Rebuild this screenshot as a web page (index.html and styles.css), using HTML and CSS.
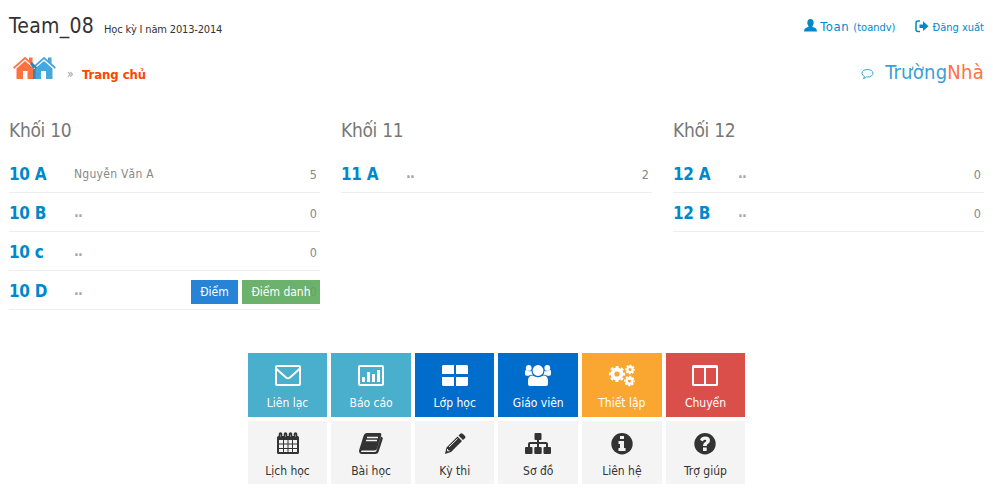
FILE: index.html
```html
<!DOCTYPE html>
<html lang="vi">
<head>
<meta charset="utf-8">
<title>Team_08</title>
<link rel="stylesheet" href="styles.css">
</head>
<body>
<header class="top">
  <div class="brand"><span class="team">Team_08</span><span class="term">Học kỳ I năm 2013-2014</span></div>
  <nav class="account">
    <a class="user"><svg class="icon-user" width="13" height="13" viewBox="0 0 13 13"><path d="M6.5 0C8.6 0 9.7 1.5 9.7 3.6S8.500 7.500 8.200 7.700L10.800 8.700Q13 9.400 13 12.500H0Q0 9.400 2.200 8.700L4.800 7.700C4.500 7.500 3.300 5.700 3.300 3.600S4.400 0 6.500 0Z"/></svg><span class="name">Toan</span><span class="login">(toandv)</span></a>
    <a class="logout"><svg class="icon-exit" width="14" height="13" viewBox="0 0 14 13"><path d="M5 1H3Q1 1 1 3V9.500Q1 11.500 3 11.500H5" fill="none" stroke="currentColor" stroke-width="1.5"/><path d="M4.500 4.400H8V1.300L13.500 6.200 8 11V8H4.500Z"/></svg><span class="exit">Đăng xuất</span></a>
  </nav>
</header>
<div class="crumbs">
  <svg class="homes" width="44" height="24" viewBox="0 0 44 24">
    <g fill="#ff7140"><path d="M0 11.500 12 .8 16 4.300V1.500H19.500V7.300L24 11.500 22.800 12.800 12 3.300 1.200 12.800Z"/><path d="M3.500 12.500 12 5 21 12.500V23H14.500V15H10V23H3.500Z"/></g>
    <g fill="#45a7dc"><path d="M19 11.500 31 .8 35 4.300V1.500H38.500V7.300L43 11.500 41.800 12.800 31 3.300 20.200 12.800Z"/><path d="M22 12.500 31 5 39.500 12.500V23H33V15H28V23H20V14Z"/></g>
    <path d="M20 14 22.500 12V23H20ZM17 8 19 6 24 11.500 22.800 12.800 21 11.200 20 12Z" fill="#3184b8"/>
  </svg>
  <span class="sep">»</span><span class="here">Trang chủ</span>
  <div class="logo"><svg class="bubble" width="13" height="12" viewBox="0 0 13 12"><path d="M6.500 1.500C9.500 1.500 12 3 12 5.200S9.500 9 6.500 9L5.400 8.900Q4.300 10.300 2.500 10.500L3.500 8.500Q1 7.400 1 5.200C1 3 3.500 1.500 6.500 1.500Z" fill="none" stroke="#3a9fd6"/></svg><span class="truong">Trường</span><span class="nha">Nhà</span></div>
</div>
<main class="grades">
  <section>
    <h2>Khối 10</h2>
    <div class="row"><b>10 A</b><span class="teacher">Nguyễn Văn A</span><span class="count">5</span></div>
    <div class="row"><b>10 B</b><span class="teacher none">..</span><span class="count">0</span></div>
    <div class="row"><b>10 c</b><span class="teacher none">..</span><span class="count">0</span></div>
    <div class="row"><b>10 D</b><span class="teacher none">..</span><span class="count">0</span><div class="actions"><a class="marks">Điểm</a><a class="roll">Điểm danh</a></div></div>
  </section>
  <section>
    <h2>Khối 11</h2>
    <div class="row"><b>11 A</b><span class="teacher none">..</span><span class="count">2</span></div>
  </section>
  <section>
    <h2>Khối 12</h2>
    <div class="row"><b>12 A</b><span class="teacher none">..</span><span class="count">0</span></div>
    <div class="row"><b>12 B</b><span class="teacher none">..</span><span class="count">0</span></div>
  </section>
</main>
<nav class="tiles">
  <a class="tile teal"><svg viewBox="0 0 26 22"><rect x="1" y="1" width="24" height="19" rx="1" class="line"/><path d="M1 3.500 11 12.500Q13 14 15 12.500L25 3.500" class="line"/></svg><span>Liên lạc</span></a>
  <a class="tile teal"><svg viewBox="0 0 26 22"><rect x="1" y="1" width="24" height="19" rx="1" class="line"/><path d="M4 12H7V17H4ZM9 7H12V17H9ZM14 9H17V17H14ZM19 5H22V17H19Z"/></svg><span>Báo cáo</span></a>
  <a class="tile blue"><svg viewBox="0 0 26 22"><path d="M1 0H12V9H0V1ZM14 0H25L26 1V9H14ZM0 12H12V21H1L0 20ZM14 12H26V20L25 21H14Z"/></svg><span>Lớp học</span></a>
  <a class="tile blue"><svg viewBox="0 0 26 22"><circle cx="13" cy="5.500" r="5.400"/><circle cx="3.700" cy="2.900" r="2.900"/><circle cx="22.300" cy="2.900" r="2.900"/><path d="M3 19V16Q3 10.500 7.500 10.500 13 14 18.500 10.500 23 10.500 23 16V19Q23 21 21 21H5Q3 21 3 19ZM0 6Q0 5 1.500 5 4 7 6.500 5.700 6.600 8.300 7.800 9.700 5 9.500 3.800 10.800H1.500Q0 10.800 0 9ZM26 6Q26 5 24.500 5 22 7 19.500 5.700 19.400 8.300 18.200 9.700 21 9.500 22.200 10.800H24.500Q26 10.800 26 9Z"/></svg><span>Giáo viên</span></a>
  <a class="tile orange"><svg viewBox="0 0 26 22"><g fill="none" stroke="currentColor"><circle cx="8" cy="9" r="4.500" stroke-width="3.800"/><circle cx="8" cy="9" r="7" stroke-width="2.200" stroke-dasharray="3 2.498" stroke-dashoffset="1.500"/><circle cx="21" cy="4.500" r="2.600" stroke-width="2.200"/><circle cx="21" cy="4.500" r="4.100" stroke-width="1.500" stroke-dasharray="2 1.220" stroke-dashoffset="1"/><circle cx="20.500" cy="16" r="2.800" stroke-width="2.400"/><circle cx="20.500" cy="16" r="4.500" stroke-width="1.600" stroke-dasharray="2.200 1.334" stroke-dashoffset="1"/></g></svg><span>Thiết lập</span></a>
  <a class="tile red"><svg viewBox="0 0 26 22"><path d="M1.500 0H24.500Q26 0 26 1.500V19.500Q26 21 24.500 21H1.500Q0 21 0 19.500V1.500Q0 0 1.500 0ZM2 3V19H12V3ZM14 3V19H24V3Z" fill-rule="evenodd"/></svg><span>Chuyển</span></a>
  <a class="tile"><svg viewBox="0 0 26 22"><path d="M3.500 3H22.500Q24 3 24 4.500V19.500Q24 21 22.500 21H3.500Q2 21 2 19.500V4.500Q2 3 3.500 3Z"/><path d="M4 7H8V10.500H4ZM9 7H12.500V10.500H9ZM13.500 7H17V10.500H13.500ZM18 7H22V10.500H18ZM4 11.500H8V15H4ZM9 11.500H12.500V15H9ZM13.500 11.500H17V15H13.500ZM18 11.500H22V15H18ZM4 16H8V19H4ZM9 16H12.500V19H9ZM13.500 16H17V19H13.500ZM18 16H22V19H18Z" fill="#f4f4f4"/><path d="M5.500 1V4M10.500 1V4M15.500 1V4M20.500 1V4" stroke="currentColor" stroke-width="3.600" stroke-linecap="round"/><path d="M5.500 1.500V4M10.500 1.500V4M15.500 1.500V4M20.500 1.500V4" stroke="#999" stroke-width=".7"/></svg><span>Lịch học</span></a>
  <a class="tile"><svg viewBox="0 0 26 22"><path d="M9 0H22Q23.800 0 23.300 2L19 15.500Q18.400 17.500 16.500 17.500H4Q2.500 18 3.200 19H16.500Q18 19 18.500 17.500L23 3.500 24.500 4.500Q25 5 24.700 6L20.500 19Q19.800 21 17.500 21H4Q1 21 1 17.500L5.500 3Q6.500 0 9 0Z"/><path d="M9 4.500H20M8 7.500H19" stroke="#f4f4f4" stroke-width="1.300"/></svg><span>Bài học</span></a>
  <a class="tile"><svg viewBox="0 0 26 22"><path d="M3 21 4.500 14.500 15.500 3.500 20 8 9 19ZM16.500 2.500 18.300.7Q19.500-.3 20.700.7L23 3Q24 4 23 5.200L21 7Z"/><path d="M7 14 15.500 5.700M5.500 16V17.800H7.500" fill="none" stroke="#f4f4f4" stroke-width="1"/></svg><span>Kỳ thi</span></a>
  <a class="tile"><svg viewBox="0 0 26 22"><rect x="9.500" width="7" height="7" rx="1"/><rect y="14" width="7.500" height="7" rx="1"/><rect x="9.300" y="14" width="7.400" height="7" rx="1"/><rect x="18.500" y="14" width="7.500" height="7" rx="1"/><path d="M13 6V15M4 15V11Q4 10 5 10H21Q22 10 22 11V15" class="line"/></svg><span>Sơ đồ</span></a>
  <a class="tile"><svg viewBox="0 0 26 22"><circle cx="13" cy="10.700" r="10.700"/><path d="M11 3H15V6H11ZM9.500 8H15V15H16.500V18H9.500V15H11V11H9.500Z" fill="#f4f4f4"/></svg><span>Liên hệ</span></a>
  <a class="tile"><svg viewBox="0 0 26 22"><circle cx="13" cy="10.700" r="10.700"/><path d="M11 14.500H14.700V18H11ZM8 6.800Q9.500 3.500 13.200 3.500 18 3.700 18 7.500 18 9.500 15.800 11 14.700 11.700 14.700 13H11Q11 10.500 12.800 9.300 14.500 8.500 14.300 7.500 14 6.500 12.700 6.700 11.700 6.900 10.500 8.500Z" fill="#f4f4f4"/></svg><span>Trợ giúp</span></a>
</nav>
</body>
</html>
```
FILE: styles.css
```css
* { box-sizing: border-box; }
body {
  margin: 0;
  padding: 0 9px;
  height: 493px;
  overflow: hidden;
  background: #fff;
  color: #333;
  font: 12px/20px "DejaVu Sans Condensed", "DejaVu Sans", sans-serif;
  font-stretch: condensed;
}
span, b, a { white-space: nowrap; }
svg { fill: currentColor; flex: none; }
.top { display: flex; justify-content: space-between; height: 50px; padding-top: 11px; }
.brand, .account { display: flex; align-items: baseline; height: 30px; line-height: 30px; }
.team { width: 95px; font-size: 21px; letter-spacing: .3px; }
.term { font-size: 11px; letter-spacing: -.17px; }
.account { padding-top: 1px; color: #0088cc; }
.user, .logout { display: flex; align-items: baseline; }
.user { margin-right: 20px; }
.icon-user { align-self: flex-start; margin: 7px 3px 0 0; }
.name { margin-right: 4px; font-size: 13px; letter-spacing: .6px; }
.login, .exit { font-size: 11px; }
.icon-exit { align-self: flex-start; margin: 7px 3px 0 0; }
.crumbs { display: flex; height: 60px; padding-top: 6px; }
.homes { margin: 0 0 0 4px; }
.sep { width: 15px; margin: 8px 0 0 10px; color: #999; font-size: 12px; }
.here { margin-top: 9px; color: #ff4500; font-size: 13px; font-weight: bold; letter-spacing: -.05px; }
.logo { display: flex; margin-left: auto; font-size: 20px; line-height: 33px; letter-spacing: .25px; }
.bubble { margin: 12px 11px 0 0; }
.truong { color: #3a9fd6; }
.nha { color: #ff7043; }
.grades { display: grid; grid-template-columns: repeat(3, 311px); column-gap: 21px; height: 243px; align-items: start; }
h2 { height: 44px; margin: 0; padding-top: 5px; color: #777; font-size: 19px; font-weight: normal; line-height: 30px; letter-spacing: -.3px; }
.row { position: relative; display: flex; height: 39px; padding-top: 6px; border-bottom: 1px solid #eee; line-height: 28px; color: #888; }
.row b { width: 65px; color: #0088cc; font-size: 17px; letter-spacing: -.3px; }
.teacher { font-size: 12px; line-height: 29px; letter-spacing: .27px; }
.none { font-size: 14px; font-weight: bold; line-height: 27px; letter-spacing: -.8px; color: #a0a7ad; }
.count { margin: 0 3px 0 auto; font-size: 12.5px; line-height: 29px; }
.actions { position: absolute; right: 0; top: 9px; display: flex; gap: 4px; }
.actions a { height: 24px; line-height: 25px; text-align: center; color: #fff; }
.marks { width: 47px; background: #2783d5; }
.roll { width: 78px; background: rgba(92, 168, 92, .9); }
.tiles { display: grid; grid-template-columns: repeat(6, 79.6px); grid-template-rows: 64px 63px; gap: 4px; width: 497.6px; margin: 0 auto; }
.tile { display: flex; flex-direction: column; align-items: center; padding-top: 12px; background: #f4f4f4; color: #333; }
.tile svg { width: 26px; height: 22px; overflow: visible; }
.tile span { margin-top: 6px; line-height: 20px; }
.line { fill: none; stroke: currentColor; stroke-width: 2; }
.teal { background: #4aaecd; color: #fff; }
.blue { background: #006dcc; color: #fff; }
.orange { background: #faa732; color: #fff; }
.red { background: #da4f4a; color: #fff; }
```
